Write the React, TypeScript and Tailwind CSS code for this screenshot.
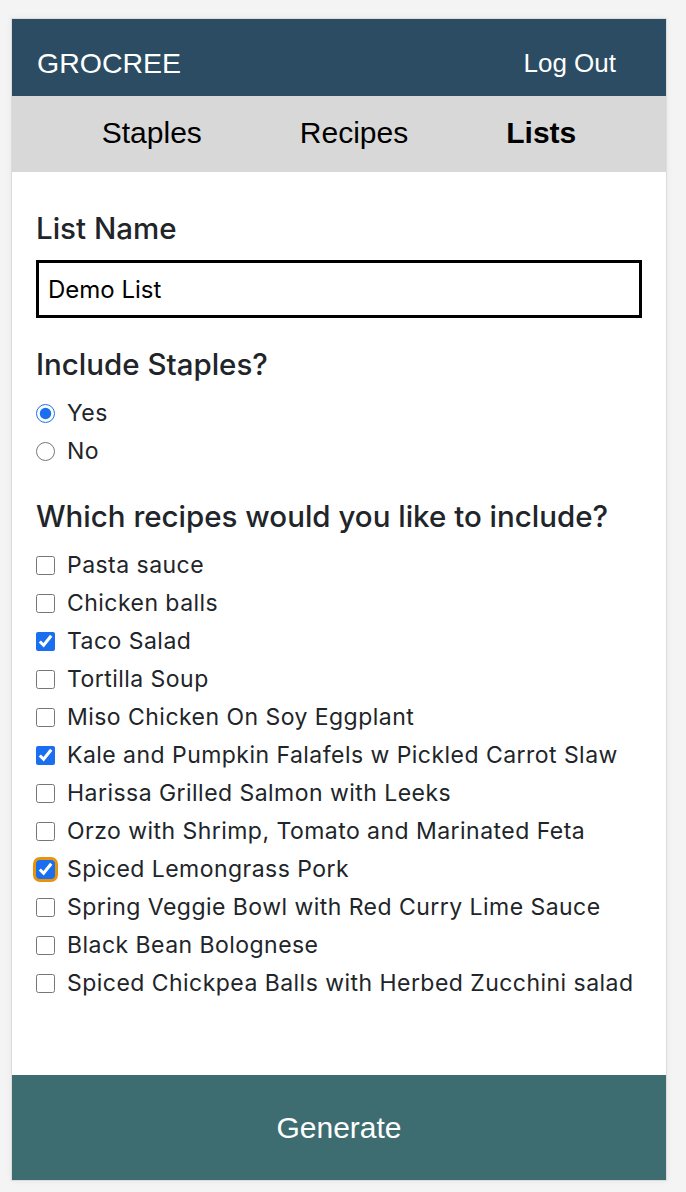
import React, { useState } from 'react'

const recipes = [
  'Pasta sauce',
  'Chicken balls',
  'Taco Salad',
  'Tortilla Soup',
  'Miso Chicken On Soy Eggplant',
  'Kale and Pumpkin Falafels w Pickled Carrot Slaw',
  'Harissa Grilled Salmon with Leeks',
  'Orzo with Shrimp, Tomato and Marinated Feta',
  'Spiced Lemongrass Pork',
  'Spring Veggie Bowl with Red Curry Lime Sauce',
  'Black Bean Bolognese',
  'Spiced Chickpea Balls with Herbed Zucchini salad',
]

const App = () => {
  const [listName, setListName] = useState('Demo List')
  const [staples, setStaples] = useState('yes')
  const [checked, setChecked] = useState<string[]>([
    'Taco Salad',
    'Kale and Pumpkin Falafels w Pickled Carrot Slaw',
    'Spiced Lemongrass Pork',
  ])

  const toggle = (name: string) => {
    setChecked((prev) => (prev.includes(name) ? prev.filter((n) => n !== name) : [...prev, name]))
  }

  return (
    <div className="min-h-screen bg-[#f4f4f4] pt-[18px] pb-[10px] font-['Inter',sans-serif]">
      <div className="mx-auto w-[656px] border border-[#dcdcdc] bg-white shadow-[0_0_6px_rgba(0,0,0,0.06)] translate-x-[-4px]">
        {/* Header */}
        <div className="flex h-[77px] items-center justify-between bg-[#2b4c62] pl-[25px] pr-[50px] pt-[12px] font-['Liberation_Sans',Arial,sans-serif] text-white">
          <span className="text-[28.5px]">GROCREE</span>
          <span className="text-[26px]">Log Out</span>
        </div>

        {/* Nav */}
        <div className="flex h-[76px] items-center justify-center gap-[98px] bg-[#d8d8d8] pb-[3px] font-['Liberation_Sans',Arial,sans-serif] text-[30px] text-black">
          <span>Staples</span>
          <span>Recipes</span>
          <span className="font-bold">Lists</span>
        </div>

        {/* Form */}
        <div className="px-6 pt-[38px] pb-[73px] text-[#212529]">
          <h2 className="text-[29.5px] font-medium leading-[36px]">List Name</h2>
          <input
            value={listName}
            onChange={(e) => setListName(e.target.value)}
            className="mt-[14px] h-[58px] w-full border-[3px] border-black px-[9px] text-[24px] text-black outline-none"
          />

          <h2 className="mt-[28px] text-[29.5px] font-medium leading-[36px]">Include Staples?</h2>
          <div className="mt-[12px] flex flex-col">
            {['Yes', 'No'].map((opt) => (
              <label key={opt} className="flex h-[38px] items-center gap-[12px] text-[23px] tracking-[0.02em]">
                <input
                  type="radio"
                  name="staples"
                  checked={staples === opt.toLowerCase()}
                  onChange={() => setStaples(opt.toLowerCase())}
                  className="m-0 h-[19px] w-[19px] accent-[#1a6ff0]"
                />
                {opt}
              </label>
            ))}
          </div>

          <h2 className="mt-[28px] text-[29.5px] font-medium leading-[36px]">Which recipes would you like to include?</h2>
          <div className="mt-[12px] flex flex-col">
            {recipes.map((r) => (
              <label key={r} className="flex h-[38px] items-center gap-[12px] text-[23px] tracking-[0.02em]">
                <span
                  className={
                    r === 'Spiced Lemongrass Pork'
                      ? 'flex rounded-[4px] outline-[3px] outline-solid outline-[#e8930c]'
                      : 'flex'
                  }
                >
                  <input
                    type="checkbox"
                    checked={checked.includes(r)}
                    onChange={() => toggle(r)}
                    className="m-0 h-[19px] w-[19px] accent-[#1a6ff0]"
                  />
                </span>
                {r}
              </label>
            ))}
          </div>
        </div>

        {/* Generate */}
        <button className="flex h-[105px] w-full items-center justify-center bg-[#3e6d71] font-['Liberation_Sans',Arial,sans-serif] text-[30px] text-white">
          Generate
        </button>
      </div>
    </div>
  )
}

export default App
